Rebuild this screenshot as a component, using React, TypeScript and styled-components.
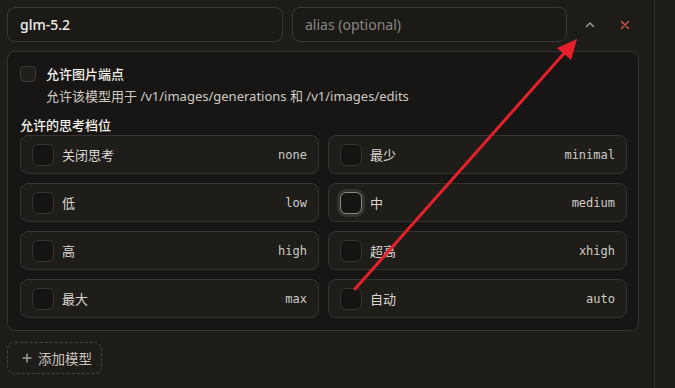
import React from "react";
import styled, { createGlobalStyle } from "styled-components";

const GlobalStyle = createGlobalStyle`
  html, body { margin: 0; padding: 0; background: #1d1c19; }
  body {
    font-family: "Noto Sans", "Noto Sans CJK SC", sans-serif;
    color: #e8e5df;
    -webkit-font-smoothing: antialiased;
  }
  * { box-sizing: border-box; }
`;

const Page = styled.div`
  position: relative;
  display: flex;
  width: 675px;
  height: 388px;
  overflow: hidden;
  background: #1d1c19;
`;

const Main = styled.div`
  width: 655px;
  height: 388px;
  border-right: 1px solid #35332f;
  padding: 7px 0 0 7px;
`;

const HeaderRow = styled.div`
  display: flex;
  align-items: center;
  gap: 9px;
`;

const TextInput = styled.div<{ $placeholder?: boolean; $w: number }>`
  width: ${(p) => p.$w}px;
  height: 35px;
  border: 1px solid #3a3834;
  border-radius: 8px;
  background: #1b1a17;
  display: flex;
  align-items: center;
  padding: 0 12px;
  font-size: 14px;
  font-weight: ${(p) => (p.$placeholder ? 400 : 500)};
  color: ${(p) => (p.$placeholder ? "#8a867e" : "#f2efe9")};
`;

const IconBtn = styled.button<{ $danger?: boolean }>`
  width: 28px;
  height: 28px;
  border: none;
  background: transparent;
  padding: 0;
  display: flex;
  align-items: center;
  justify-content: center;
  color: ${(p) => (p.$danger ? "#e0564e" : "#a8a49c")};
`;

const Actions = styled.div`
  display: flex;
  align-items: center;
  gap: 7px;
`;

const Panel = styled.div`
  margin-top: 9px;
  width: 632px;
  height: 280px;
  border: 1px solid #35332f;
  border-radius: 8px;
  background: #171614;
  padding: 13px 11px 0 12px;
`;

const CheckRow = styled.div`
  display: flex;
  align-items: flex-start;
  gap: 10px;
`;

const SmallBox = styled.span`
  width: 16px;
  height: 16px;
  margin-top: 1px;
  border: 1px solid #3a3834;
  border-radius: 4px;
  background: #201f1c;
  flex-shrink: 0;
`;

const CheckText = styled.div`
  display: flex;
  flex-direction: column;
  gap: 4px;
`;

const CheckTitle = styled.div`
  font-size: 13px;
  line-height: 18px;
  font-weight: 500;
  color: #f4f1eb;
`;

const CheckDesc = styled.div`
  font-size: 13px;
  line-height: 18px;
  color: #cfcbc3;
`;

const SectionTitle = styled.div`
  margin-top: 12px;
  font-size: 13px;
  line-height: 17px;
  font-weight: 500;
  color: #f4f1eb;
`;

const Grid = styled.div`
  margin-top: 1px;
  display: grid;
  grid-template-columns: 299px 299px;
  grid-auto-rows: 39px;
  gap: 9px;
`;

const Option = styled.div`
  display: flex;
  align-items: center;
  gap: 8px;
  padding: 0 11px;
  border: 1px solid #35332f;
  border-radius: 8px;
  background: #1e1d1a;
`;

const Box = styled.span<{ $focus?: boolean }>`
  width: 22px;
  height: 22px;
  border-radius: 6px;
  border: 1px solid ${(p) => (p.$focus ? "#8e8a82" : "#36342f")};
  background: #151412;
  box-shadow: ${(p) => (p.$focus ? "0 0 0 3px #34322e" : "none")};
  flex-shrink: 0;
`;

const OptLabel = styled.span`
  font-size: 13px;
  color: #dcd8d0;
`;

const OptValue = styled.span`
  margin-left: auto;
  font-family: "DejaVu Sans Mono", "Liberation Mono", monospace;
  font-size: 12px;
  color: #cfcbc3;
`;

const AddButton = styled.button`
  margin-top: 11px;
  width: 95px;
  height: 32px;
  border: 1px dashed #45433e;
  border-radius: 8px;
  background: transparent;
  display: flex;
  align-items: center;
  gap: 6px;
  padding: 0 0 0 14px;
  font-family: "Noto Sans CJK SC", sans-serif;
  font-size: 13.5px;
  color: #c9c5bd;
`;

const Overlay = styled.svg`
  position: absolute;
  left: 0;
  top: 0;
  pointer-events: none;
`;

const options: { label: string; value: string; focus?: boolean }[] = [
  { label: "关闭思考", value: "none" },
  { label: "最少", value: "minimal" },
  { label: "低", value: "low" },
  { label: "中", value: "medium", focus: true },
  { label: "高", value: "high" },
  { label: "超高", value: "xhigh" },
  { label: "最大", value: "max" },
  { label: "自动", value: "auto" },
];

export default function App() {
  return (
    <>
      <GlobalStyle />
      <Page>
        <Main>
          <HeaderRow>
            <TextInput $w={276}>glm-5.2</TextInput>
            <TextInput $w={275} $placeholder>
              alias (optional)
            </TextInput>
            <Actions>
              <IconBtn aria-label="collapse">
                <svg width="12" height="12" viewBox="0 0 12 12">
                  <path d="M2.5 7.5 L6 4 L9.5 7.5" fill="none" stroke="currentColor" strokeWidth="1.4" strokeLinecap="round" strokeLinejoin="round" />
                </svg>
              </IconBtn>
              <IconBtn $danger aria-label="remove">
                <svg width="12" height="12" viewBox="0 0 12 12">
                  <path d="M2.5 2.5 L9.5 9.5 M9.5 2.5 L2.5 9.5" fill="none" stroke="currentColor" strokeWidth="1.3" strokeLinecap="round" />
                </svg>
              </IconBtn>
            </Actions>
          </HeaderRow>

          <Panel>
            <CheckRow>
              <SmallBox />
              <CheckText>
                <CheckTitle>允许图片端点</CheckTitle>
                <CheckDesc>允许该模型用于 /v1/images/generations 和 /v1/images/edits</CheckDesc>
              </CheckText>
            </CheckRow>
            <SectionTitle>允许的思考档位</SectionTitle>
            <Grid>
              {options.map((o) => (
                <Option key={o.value}>
                  <Box $focus={o.focus} />
                  <OptLabel>{o.label}</OptLabel>
                  <OptValue>{o.value}</OptValue>
                </Option>
              ))}
            </Grid>
          </Panel>

          <AddButton>
            <svg width="10" height="10" viewBox="0 0 10 10">
              <path d="M5 1 V9 M1 5 H9" stroke="#a8a49c" strokeWidth="1.4" strokeLinecap="round" />
            </svg>
            添加模型
          </AddButton>
        </Main>

        <Overlay width="675" height="388" viewBox="0 0 675 388">
          <line x1="355" y1="289" x2="567" y2="50" stroke="#e5202a" strokeWidth="3" strokeLinecap="round" />
          <polygon points="577,39 571,60 557,48" fill="#e5202a" />
        </Overlay>
      </Page>
    </>
  );
}
